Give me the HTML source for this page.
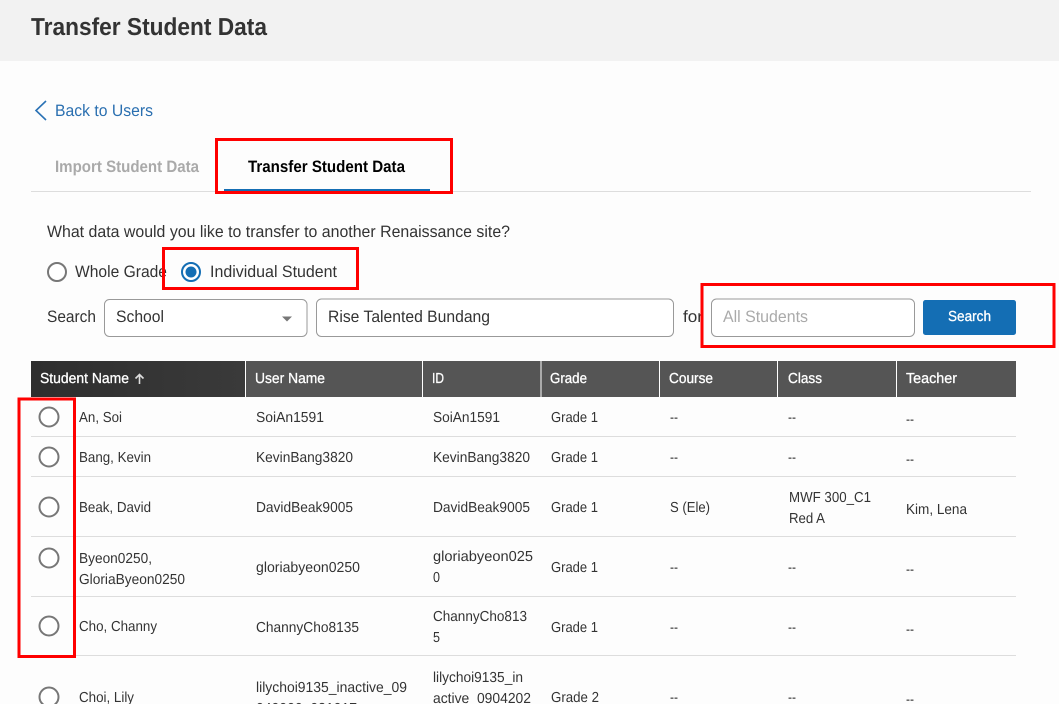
<!DOCTYPE html>
<html lang="en">
<head>
<meta charset="utf-8">
<title>Transfer Student Data</title>
<style>
html,body{margin:0;padding:0;width:1059px;height:704px;overflow:hidden;background:#fdfdfd}
svg{display:block}
text{font-family:"Liberation Sans",Arial,sans-serif;font-size:14.5px;fill:#333;text-rendering:geometricPrecision}
.b16{font-size:16.5px}
.h{fill:#fff;font-size:14.5px;stroke:#fff;stroke-width:.3}
.r{fill:#fff;stroke:#777;stroke-width:2}
.box{fill:none;stroke:#f00;stroke-width:3}
.f{fill:#fff;stroke:#999;stroke-width:1}
.l{stroke:#ddd;stroke-width:1}
.s{stroke:#fff;stroke-width:1}
</style>
</head>
<body>
<svg width="1059" height="704" viewBox="0 0 1059 704" xmlns="http://www.w3.org/2000/svg">
<defs><linearGradient id="g" x1="0" x2="1" y1="0" y2="0"><stop offset="0" stop-color="#2e2e2e"/><stop offset="1" stop-color="#3a3a3a"/></linearGradient></defs>
<rect width="1059" height="61" fill="#f2f2f2"/>
<text x="31" y="35" textLength="236" lengthAdjust="spacingAndGlyphs" style="font-size:24.5px;font-weight:bold;fill:#333">Transfer Student Data</text>

<path d="M46 101 36 110.500 46 120" fill="none" stroke="#2a72b5" stroke-width="1.600"/>
<text x="55" y="116" class="b16" textLength="98" lengthAdjust="spacingAndGlyphs" style="fill:#2a6fb0">Back to Users</text>

<text x="55" y="172" class="b16" textLength="144" lengthAdjust="spacingAndGlyphs" style="font-weight:bold;fill:#aaa">Import Student Data</text>
<text x="248" y="172" class="b16" textLength="157" lengthAdjust="spacingAndGlyphs" style="font-weight:bold;fill:#000">Transfer Student Data</text>
<line x1="31" x2="1031" y1="191.500" y2="191.500" class="l"/>
<rect x="224" y="189" width="206" height="3" fill="#146eb4"/>

<text x="47" y="237" class="b16" textLength="463" lengthAdjust="spacingAndGlyphs">What data would you like to transfer to another Renaissance site?</text>
<circle cx="57" cy="272" r="9" class="r"/>
<text x="75" y="277" class="b16" textLength="92" lengthAdjust="spacingAndGlyphs">Whole Grade</text>
<circle cx="191" cy="272" r="9" fill="#fff" stroke="#146eb4" stroke-width="2"/>
<circle cx="191" cy="272" r="5.500" fill="#146eb4"/>
<text x="210" y="277" class="b16" textLength="127" lengthAdjust="spacingAndGlyphs">Individual Student</text>

<text x="47" y="322" class="b16" textLength="49" lengthAdjust="spacingAndGlyphs">Search</text>
<rect x="104.500" y="299.500" width="202.500" height="37" rx="5" class="f"/>
<text x="116" y="322" class="b16" textLength="48" lengthAdjust="spacingAndGlyphs">School</text>
<path d="M282 316.500h10l-5 5z" fill="#777"/>
<rect x="316.500" y="299" width="357" height="37.500" rx="5" class="f"/>
<text x="328" y="322" class="b16" textLength="162" lengthAdjust="spacingAndGlyphs">Rise Talented Bundang</text>
<text x="683" y="322" class="b16" textLength="20" lengthAdjust="spacingAndGlyphs">for</text>
<rect x="711.500" y="299" width="203" height="37.500" rx="5" class="f"/>
<text x="723" y="322" class="b16" textLength="85" lengthAdjust="spacingAndGlyphs" style="fill:#aaa">All Students</text>
<rect x="923" y="300" width="93" height="35" rx="2.500" fill="#146eb4"/>
<text x="948" y="321" class="h" textLength="43" lengthAdjust="spacingAndGlyphs">Search</text>

<rect x="31" y="361" width="985" height="36" fill="#555"/>
<rect x="31" y="361" width="214" height="36" fill="url(#g)"/>
<line x1="245.500" x2="245.500" y1="361" y2="397" class="s"/>
<line x1="422.500" x2="422.500" y1="361" y2="397" class="s"/>
<line x1="541" x2="541" y1="361" y2="397" class="s"/>
<line x1="659.500" x2="659.500" y1="361" y2="397" class="s"/>
<line x1="777.500" x2="777.500" y1="361" y2="397" class="s"/>
<line x1="896.500" x2="896.500" y1="361" y2="397" class="s"/>
<text x="40" y="383" class="h" textLength="89" lengthAdjust="spacingAndGlyphs">Student Name</text>
<path d="M139.500 384v-9M135.500 378.500l4-4 4 4" fill="none" stroke="#ddd" stroke-width="1.600"/>
<text x="255" y="383" class="h" textLength="70" lengthAdjust="spacingAndGlyphs">User Name</text>
<text x="432" y="383" class="h" textLength="12" lengthAdjust="spacingAndGlyphs">ID</text>
<text x="550" y="383" class="h" textLength="37" lengthAdjust="spacingAndGlyphs">Grade</text>
<text x="669" y="383" class="h" textLength="44" lengthAdjust="spacingAndGlyphs">Course</text>
<text x="788" y="383" class="h" textLength="34" lengthAdjust="spacingAndGlyphs">Class</text>
<text x="906" y="383" class="h" textLength="51" lengthAdjust="spacingAndGlyphs">Teacher</text>

<line x1="31" x2="1016" y1="436.500" y2="436.500" class="l"/>
<line x1="31" x2="1016" y1="476.500" y2="476.500" class="l"/>
<line x1="31" x2="1016" y1="536.500" y2="536.500" class="l"/>
<line x1="31" x2="1016" y1="596.500" y2="596.500" class="l"/>
<line x1="31" x2="1016" y1="655.500" y2="655.500" class="l"/>

<circle cx="49" cy="417" r="9.500" class="r"/>
<circle cx="49" cy="457" r="9.500" class="r"/>
<circle cx="49" cy="507" r="9.500" class="r"/>
<circle cx="49" cy="558" r="9.500" class="r"/>
<circle cx="49" cy="626" r="9.500" class="r"/>
<circle cx="49" cy="697" r="9.500" class="r"/>

<text x="79" y="422" textLength="43" lengthAdjust="spacingAndGlyphs">An, Soi</text>
<text x="256" y="422" textLength="68" lengthAdjust="spacingAndGlyphs">SoiAn1591</text>
<text x="433" y="422" textLength="67" lengthAdjust="spacingAndGlyphs">SoiAn1591</text>
<text x="551" y="422" textLength="47" lengthAdjust="spacingAndGlyphs">Grade 1</text>
<text x="670" y="422" textLength="8" lengthAdjust="spacingAndGlyphs">--</text>
<text x="788" y="422" textLength="8" lengthAdjust="spacingAndGlyphs">--</text>
<text x="906" y="424" textLength="8" lengthAdjust="spacingAndGlyphs">--</text>

<text x="79" y="462" textLength="72" lengthAdjust="spacingAndGlyphs">Bang, Kevin</text>
<text x="256" y="462" textLength="97" lengthAdjust="spacingAndGlyphs">KevinBang3820</text>
<text x="433" y="462" textLength="97" lengthAdjust="spacingAndGlyphs">KevinBang3820</text>
<text x="551" y="462" textLength="47" lengthAdjust="spacingAndGlyphs">Grade 1</text>
<text x="670" y="462" textLength="8" lengthAdjust="spacingAndGlyphs">--</text>
<text x="788" y="462" textLength="8" lengthAdjust="spacingAndGlyphs">--</text>
<text x="906" y="464" textLength="8" lengthAdjust="spacingAndGlyphs">--</text>

<text x="79" y="512" textLength="72" lengthAdjust="spacingAndGlyphs">Beak, David</text>
<text x="256" y="512" textLength="97" lengthAdjust="spacingAndGlyphs">DavidBeak9005</text>
<text x="433" y="512" textLength="97" lengthAdjust="spacingAndGlyphs">DavidBeak9005</text>
<text x="551" y="512" textLength="47" lengthAdjust="spacingAndGlyphs">Grade 1</text>
<text x="670" y="512" textLength="40" lengthAdjust="spacingAndGlyphs">S (Ele)</text>
<text x="789" y="502" textLength="82" lengthAdjust="spacingAndGlyphs">MWF 300_C1</text>
<text x="789" y="523" textLength="36" lengthAdjust="spacingAndGlyphs">Red A</text>
<text x="906" y="514" textLength="61" lengthAdjust="spacingAndGlyphs">Kim, Lena</text>

<text x="79" y="563" textLength="73" lengthAdjust="spacingAndGlyphs">Byeon0250,</text>
<text x="79" y="584" textLength="106" lengthAdjust="spacingAndGlyphs">GloriaByeon0250</text>
<text x="256" y="572" textLength="104" lengthAdjust="spacingAndGlyphs">gloriabyeon0250</text>
<text x="433" y="561" textLength="100" lengthAdjust="spacingAndGlyphs">gloriabyeon025</text>
<text x="433" y="582" textLength="7" lengthAdjust="spacingAndGlyphs">0</text>
<text x="551" y="572" textLength="47" lengthAdjust="spacingAndGlyphs">Grade 1</text>
<text x="670" y="572" textLength="8" lengthAdjust="spacingAndGlyphs">--</text>
<text x="788" y="572" textLength="8" lengthAdjust="spacingAndGlyphs">--</text>
<text x="906" y="574" textLength="8" lengthAdjust="spacingAndGlyphs">--</text>

<text x="79" y="631" textLength="78" lengthAdjust="spacingAndGlyphs">Cho, Channy</text>
<text x="256" y="632" textLength="103" lengthAdjust="spacingAndGlyphs">ChannyCho8135</text>
<text x="433" y="621" textLength="94" lengthAdjust="spacingAndGlyphs">ChannyCho813</text>
<text x="433" y="642" textLength="7" lengthAdjust="spacingAndGlyphs">5</text>
<text x="551" y="632" textLength="47" lengthAdjust="spacingAndGlyphs">Grade 1</text>
<text x="670" y="632" textLength="8" lengthAdjust="spacingAndGlyphs">--</text>
<text x="788" y="632" textLength="8" lengthAdjust="spacingAndGlyphs">--</text>
<text x="906" y="634" textLength="8" lengthAdjust="spacingAndGlyphs">--</text>

<text x="79" y="702" textLength="55" lengthAdjust="spacingAndGlyphs">Choi, Lily</text>
<text x="256" y="692" textLength="151" lengthAdjust="spacingAndGlyphs">lilychoi9135_inactive_09</text>
<text x="256" y="713" textLength="101" lengthAdjust="spacingAndGlyphs">040000_031017</text>
<text x="433" y="682" textLength="90" lengthAdjust="spacingAndGlyphs">lilychoi9135_in</text>
<text x="433" y="703" textLength="98" lengthAdjust="spacingAndGlyphs">active_0904202</text>
<text x="551" y="702" textLength="48" lengthAdjust="spacingAndGlyphs">Grade 2</text>
<text x="670" y="702" textLength="8" lengthAdjust="spacingAndGlyphs">--</text>
<text x="788" y="702" textLength="8" lengthAdjust="spacingAndGlyphs">--</text>
<text x="906" y="704" textLength="8" lengthAdjust="spacingAndGlyphs">--</text>

<rect x="216.500" y="139.500" width="235" height="53" class="box"/>
<rect x="163.500" y="248.500" width="194" height="40" class="box"/>
<rect x="702" y="284.500" width="352" height="62" class="box"/>
<rect x="19" y="399" width="55.500" height="257.500" class="box"/>
</svg>
</body>
</html>
